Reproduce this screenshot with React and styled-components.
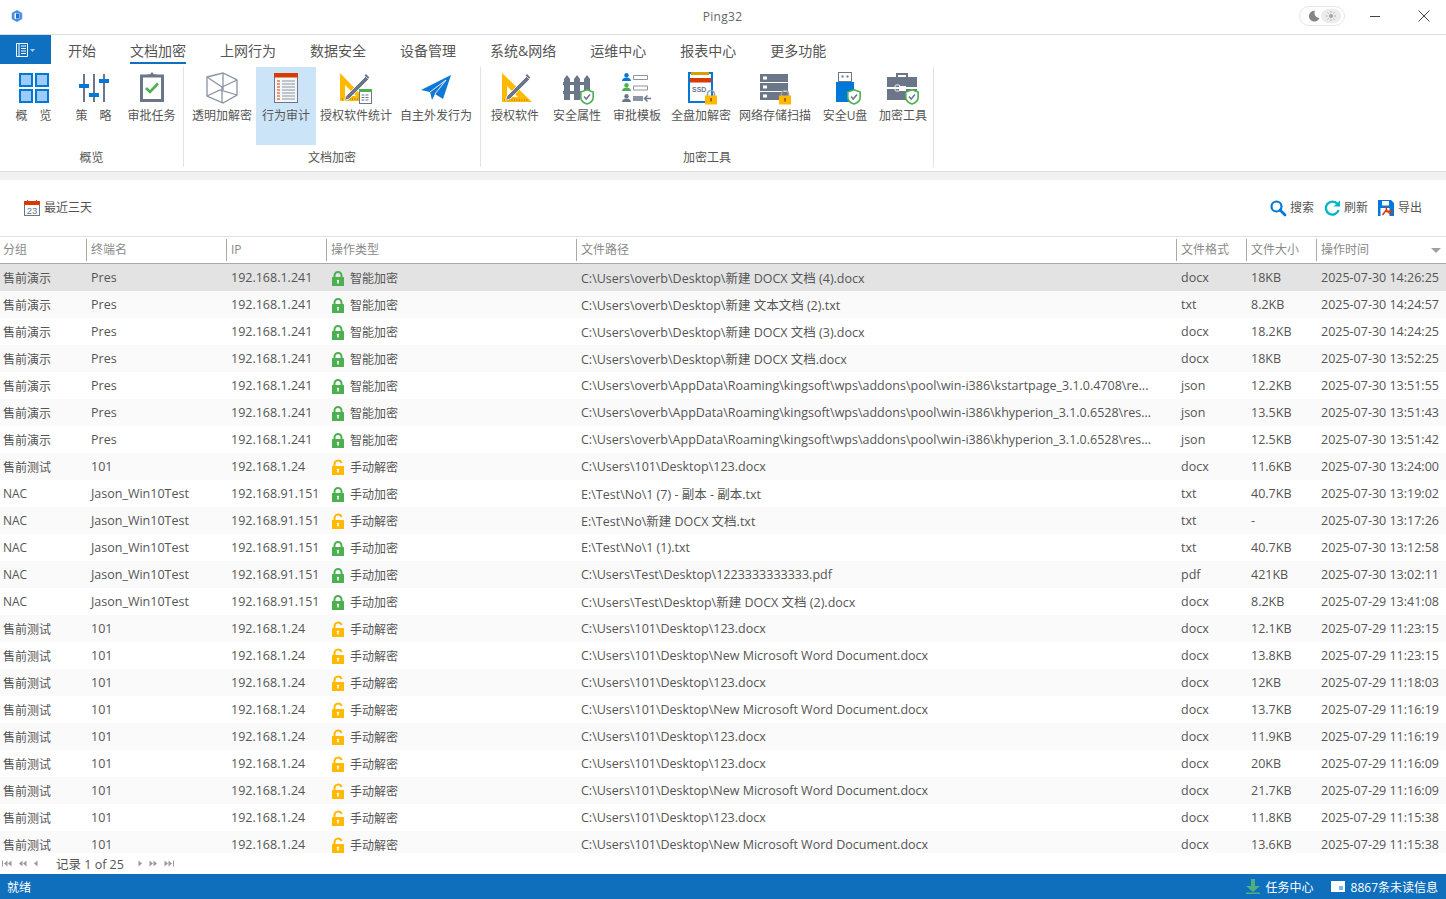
import React from 'react';
import styled, { createGlobalStyle } from 'styled-components';

const GRAY = '#6b7789';
const BLUE = '#0078d7';
const GREEN = '#4caf50';
const AMBER = '#ffb900';

const GlobalStyle = createGlobalStyle`
  html, body { margin: 0; padding: 0; height: 100%; overflow: hidden; background: #fff; }
  #root { height: 100%; }
  * { box-sizing: border-box; }
`;

// small parts that several icons share //
const Shield = ({ x, y }) => (
  <g transform={`translate(${x} ${y})`}>
    <path d="M7 .8 13.2 3v5.2c0 3.4-2.6 5.6-6.2 6.9C3.4 13.8.8 11.6.8 8.2V3z" fill="#fff" stroke={GREEN} strokeWidth="1.6" />
    <path d="M4 7.6 6.2 10 10 5.6" fill="none" stroke={GRAY} strokeWidth="1.5" />
  </g>
);

const SmallLock = ({ x, y }) => (
  <g transform={`translate(${x} ${y})`}>
    <path d="M2.5 7V5a3.5 3.5 0 0 1 7 0v2" fill="none" stroke="#9aa3af" strokeWidth="1.7" />
    <rect y="6.5" width="12" height="9" fill={AMBER} />
    <rect x="5.3" y="9" width="1.5" height="3.5" fill="#7a5a00" />
  </g>
);

const Pencil = ({ dx = 0 }) => (
  <g transform={`translate(${dx} 0)`}>
    <path d="M6 24 25.5 4.5l3 3L9 27l-4.6 1.4z" fill={GRAY} stroke="#fff" strokeWidth=".8" />
    <path d="M24.5 3.5 26 2l3.4 3.4L28 6.8z" fill={GRAY} />
  </g>
);

const Svg = styled.svg`
  display: block;
  flex: none;
  overflow: visible;
`;

const Icon = ({ size = 32, view, children }) => (
  <Svg width={size} height={size} viewBox={view || `0 0 ${size} ${size}`}>
    {children}
  </Svg>
);

const OverviewIcon = () => (
  <Icon>
    {[[1, 1], [17, 1], [1, 17], [17, 17]].map(([x, y]) => (
      <rect key={`${x}${y}`} x={x + 1} y={y + 1} width="12" height="12" fill="#9ccbf7" stroke={BLUE} strokeWidth="2" />
    ))}
  </Icon>
);

const PolicyIcon = () => (
  <Icon>
    <path d="M6 2v28M16 2v28M26 2v28" stroke={GRAY} strokeWidth="2" />
    <path d="M1 12h10v4H1zM11 21h10v4H11zM21 7h10v4H21z" fill={BLUE} />
  </Icon>
);

const ApproveIcon = () => (
  <Icon>
    <rect x="5.5" y="4" width="21" height="24.5" fill="#fff" stroke={GRAY} strokeWidth="3" />
    <path d="M11 5V2.5h3L16 0l2 2.5h3V5z" fill={GRAY} />
    <path d="M10 16l4 4 8-8.5" fill="none" stroke={GREEN} strokeWidth="2.6" />
  </Icon>
);

const CubeIcon = () => (
  <Icon>
    <g fill="none" stroke="#8a94a3" strokeWidth="1.3">
      <path d="M1 5 17 1l14 7v15L17 31 1 24z" />
      <path d="M1 5l15 10 15-7M16 15v16M1 24l13-6 17 5M17 1v17" />
    </g>
  </Icon>
);

const AuditIcon = () => (
  <Icon>
    <rect x="4.5" y="1.5" width="23" height="29" fill="#f4f6f8" stroke={GRAY} />
    <rect x="4" y="1" width="24" height="4.5" fill="#d83b01" />
    {[9, 12, 15, 18, 21, 24, 27].map((y) => (
      <g key={y}>
        <path d={`M7 ${y}h3`} stroke="#d83b01" />
        <path d={`M12 ${y}h13`} stroke="#8a94a3" />
      </g>
    ))}
  </Icon>
);

const SoftwareStatIcon = () => (
  <Icon>
    <path d="M0 1v28h27z" fill={AMBER} />
    <path d="M5 13v11h11z" fill="#fff" />
    <path d="M2 27h20" stroke="#8a6a00" strokeDasharray="1 1.5" />
    <Pencil />
    <rect x="19.5" y="17.5" width="12" height="14" fill="#fff" stroke={GRAY} />
    <rect x="19" y="17" width="13" height="3" fill={GREEN} />
    <path d="M21.5 23h8M21.5 25.5h8M21.5 28h8" stroke={GRAY} strokeDasharray="3 1" />
  </Icon>
);

const PlaneIcon = () => (
  <Icon>
    <path d="M1 18 31 3 23 27l-8-5-3 6-2-8z" fill="#0f78d4" />
    <path d="M10 20 26 8 15 22" fill="none" stroke="#fff" strokeWidth=".9" />
  </Icon>
);

const LicenseIcon = () => (
  <Icon>
    <path d="M3 1v29h30z" fill={AMBER} />
    <path d="M8 14v11h11z" fill="#fff" />
    <path d="M5 28h24" stroke="#8a6a00" strokeDasharray="1 1.5" />
    <Pencil dx={2} />
  </Icon>
);

const FenceIcon = () => (
  <Icon>
    <path d="M2 10h26v3H2zM2 19h26v3H2z" fill={GRAY} />
    {[2, 12, 22].map((x) => (
      <path key={x} d={`M${x} 5l3-4 3 4v21h-6z`} fill={GRAY} transform={`translate(1 2)`} />
    ))}
    <Shield x={19} y={17} />
  </Icon>
);

const Person = ({ y, color }) => (
  <g transform={`translate(1 ${y})`}>
    <circle cx="4.5" cy="2.2" r="2.2" fill={color} />
    <path d="M0 8c0-2 2-3.4 4.5-3.4S9 6 9 8z" fill={color} />
  </g>
);

const TemplateIcon = () => (
  <Icon>
    <Person y={1} color={BLUE} />
    <Person y={11} color={GREEN} />
    <Person y={22} color={GRAY} />
    <path d="M12.5 3.5h14v4h-14zM12.5 14h14v4h-14z" fill="#fff" stroke="#8a94a3" />
    <rect x="12" y="24" width="10" height="5" fill="#8a94a3" />
    <path d="M30 26.5h-6M26.5 23.5l-3 3 3 3" fill="none" stroke={GRAY} strokeWidth="1.4" />
  </Icon>
);

const SsdIcon = () => (
  <Icon>
    <rect x="4" y="1" width="23" height="29" fill="#fff" stroke={BLUE} strokeWidth="2" />
    <rect x="6" y="0" width="18" height="3" fill="#d6a000" />
    <rect x="5" y="6" width="21" height="4.5" fill="#d83b01" />
    <SsdText x="7" y="20">SSD</SsdText>
    <SmallLock x={20} y={17} />
  </Icon>
);

const SsdText = styled.text`
  font: 700 7px "Liberation Sans", sans-serif;
  fill: ${GRAY};
`;

const StorageIcon = () => (
  <Icon>
    {[2, 11, 20].map((y) => (
      <g key={y}>
        <rect x="1" y={y} width="28" height="8" fill={GRAY} />
        <rect x="4" y={y + 2.5} width="4" height="3" fill="#fff" />
      </g>
    ))}
    <SmallLock x={20} y={17} />
  </Icon>
);

const UsbIcon = () => (
  <Icon>
    <rect x="9.5" y=".5" width="13" height="9" fill="#fff" stroke={GRAY} />
    <path d="M12.5 3.5h2v2h-2zM17.5 3.5h2v2h-2z" fill={GRAY} />
    <rect x="7" y="10" width="18" height="20" fill={BLUE} />
    <Shield x={18} y={17} />
  </Icon>
);

const CaseIcon = () => (
  <Icon>
    <path d="M10 6V2h10v4" fill="none" stroke={GRAY} strokeWidth="2" />
    <path d="M0 5h30v10H19v-1h-7v1H0zM0 17h12v2h7v-2h11v11H0z" fill={GRAY} />
    <rect x="8" y="13" width="5" height="6" rx="1.5" fill="none" stroke="#fff" />
    <Shield x={18} y={17} />
  </Icon>
);

const CalendarIcon = () => (
  <Icon size={16}>
    <rect x=".5" y="1.5" width="15" height="14" fill="#fff" stroke={GRAY} />
    <rect y="1" width="16" height="4" fill="#d83b01" />
    <path d="M3.5 0v2M12.5 0v2" stroke="#d83b01" />
    <CalendarText x="8" y="14">23</CalendarText>
  </Icon>
);

const CalendarText = styled.text`
  font: 9.5px "Liberation Sans", sans-serif;
  fill: ${GRAY};
  text-anchor: middle;
`;

const SearchIcon = () => (
  <Icon size={16}>
    <circle cx="6.5" cy="6.5" r="5" fill="none" stroke={BLUE} strokeWidth="2.2" />
    <path d="M10 10l5 5" stroke={BLUE} strokeWidth="2.8" strokeLinecap="round" />
  </Icon>
);

const RefreshIcon = () => (
  <Icon size={16}>
    <path d="M13.6 4.2A6.5 6.5 0 1 0 14.6 10" fill="none" stroke="#00b7c3" strokeWidth="2.4" />
    <path d="M9.5 6.5H16V.5z" fill="#00b7c3" />
  </Icon>
);

const ExportIcon = () => (
  <Icon size={16}>
    <path d="M0 0h13l3 3v13H0z" fill={BLUE} />
    <path d="M4 1h7v4.500H4z" fill="#fff" />
    <path d="M2.500 8h9v8h-9z" fill="#fff" />
    <path d="M8 6.500l.8 4.500 4.200 3.500M8.300 10l-3.800 5M8 11.500l7-.5" fill="none" stroke="#d83b01" strokeWidth="1.500" />
  </Icon>
);

const ClosedLock = () => (
  <Icon size={16}>
    <path d="M3.500 8V5.500a3.500 3.500 0 0 1 7 0V8" fill="none" stroke={GREEN} strokeWidth="2" />
    <rect x="1" y="7" width="12" height="9" rx=".5" fill={GREEN} />
    <path d="M7 10v3.500" stroke="#fff" strokeWidth="1.500" />
    <path d="M5.500 11 7 9.500 8.500 11z" fill="#fff" />
  </Icon>
);

const OpenLock = () => (
  <Icon size={16}>
    <path d="M3.500 7.500V5.200a3.600 3.600 0 0 1 7-1.200" fill="none" stroke={AMBER} strokeWidth="2" />
    <rect x="1" y="7" width="12" height="9" rx=".5" fill={AMBER} />
    <path d="M7 10v3.500" stroke="#fff" strokeWidth="1.500" />
    <path d="M5.500 11 7 9.500 8.500 11z" fill="#fff" />
  </Icon>
);

const PageMark = ({ bar, count, flip }) => {
  const tris = [];
  for (let i = 0; i < count; i++) {
    const x = (bar ? 2 : 0) + i * 4;
    tris.push(<path key={i} d={`M${x} 3.500 ${x + 3.500} .5v6z`} />);
  }
  return (
    <PageSvg width={(bar ? 2 : 0) + count * 4} height="7" $flip={flip}>
      {bar && <rect y=".5" width="1" height="6" />}
      {tris}
    </PageSvg>
  );
};

const PageSvg = styled.svg`
  display: block;
  fill: #9a9a9a;
  transform: ${(p) => (p.$flip ? 'scaleX(-1)' : 'none')};
`;

const ribbonGroups = [
  {
    name: '概览',
    width: 184,
    items: [
      { label: '概　览', w: 60, icon: <OverviewIcon /> },
      { label: '策　略', w: 60, icon: <PolicyIcon /> },
      { label: '审批任务', w: 56, icon: <ApproveIcon /> },
    ],
  },
  {
    name: '文档加密',
    width: 297,
    items: [
      { label: '透明加解密', w: 68, icon: <CubeIcon /> },
      { label: '行为审计', w: 60, icon: <AuditIcon />, active: true },
      { label: '授权软件统计', w: 80, icon: <SoftwareStatIcon /> },
      { label: '自主外发行为', w: 80, icon: <PlaneIcon /> },
    ],
  },
  {
    name: '加密工具',
    width: 453,
    items: [
      { label: '授权软件', w: 58, icon: <LicenseIcon /> },
      { label: '安全属性', w: 66, icon: <FenceIcon /> },
      { label: '审批模板', w: 54, icon: <TemplateIcon /> },
      { label: '全盘加解密', w: 74, icon: <SsdIcon /> },
      { label: '网络存储扫描', w: 74, icon: <StorageIcon /> },
      { label: '安全U盘', w: 66, icon: <UsbIcon /> },
      { label: '加密工具', w: 50, icon: <CaseIcon /> },
    ],
  },
];

const tabs = ['开始', '文档加密', '上网行为', '数据安全', '设备管理', '系统&网络', '运维中心', '报表中心', '更多功能'];
const columns = ['分组', '终端名', 'IP', '操作类型', '文件路径', '文件格式', '文件大小', '操作时间'];

const PRE = ['售前演示', 'Pres', '192.168.1.241'];
const TEST = ['售前测试', '101', '192.168.1.24'];
const NAC = ['NAC', 'Jason_Win10Test', '192.168.91.151'];
const WPS = 'C:\\Users\\overb\\AppData\\Roaming\\kingsoft\\wps\\addons\\pool\\win-i386\\';
const DOC = 'C:\\Users\\101\\Desktop\\123.docx';
const WORD = 'C:\\Users\\101\\Desktop\\New Microsoft Word Document.docx';

const rows = [
  [...PRE, '智能加密', 'C:\\Users\\overb\\Desktop\\新建 DOCX 文档 (4).docx', 'docx', '18KB', '2025-07-30 14:26:25'],
  [...PRE, '智能加密', 'C:\\Users\\overb\\Desktop\\新建 文本文档 (2).txt', 'txt', '8.2KB', '2025-07-30 14:24:57'],
  [...PRE, '智能加密', 'C:\\Users\\overb\\Desktop\\新建 DOCX 文档 (3).docx', 'docx', '18.2KB', '2025-07-30 14:24:25'],
  [...PRE, '智能加密', 'C:\\Users\\overb\\Desktop\\新建 DOCX 文档.docx', 'docx', '18KB', '2025-07-30 13:52:25'],
  [...PRE, '智能加密', `${WPS}kstartpage_3.1.0.4708\\re...`, 'json', '12.2KB', '2025-07-30 13:51:55'],
  [...PRE, '智能加密', `${WPS}khyperion_3.1.0.6528\\res...`, 'json', '13.5KB', '2025-07-30 13:51:43'],
  [...PRE, '智能加密', `${WPS}khyperion_3.1.0.6528\\res...`, 'json', '12.5KB', '2025-07-30 13:51:42'],
  [...TEST, '手动解密', DOC, 'docx', '11.6KB', '2025-07-30 13:24:00'],
  [...NAC, '手动加密', 'E:\\Test\\No\\1 (7) - 副本 - 副本.txt', 'txt', '40.7KB', '2025-07-30 13:19:02'],
  [...NAC, '手动解密', 'E:\\Test\\No\\新建 DOCX 文档.txt', 'txt', '-', '2025-07-30 13:17:26'],
  [...NAC, '手动加密', 'E:\\Test\\No\\1 (1).txt', 'txt', '40.7KB', '2025-07-30 13:12:58'],
  [...NAC, '手动加密', 'C:\\Users\\Test\\Desktop\\1223333333333.pdf', 'pdf', '421KB', '2025-07-30 13:02:11'],
  [...NAC, '手动加密', 'C:\\Users\\Test\\Desktop\\新建 DOCX 文档 (2).docx', 'docx', '8.2KB', '2025-07-29 13:41:08'],
  [...TEST, '手动解密', DOC, 'docx', '12.1KB', '2025-07-29 11:23:15'],
  [...TEST, '手动解密', WORD, 'docx', '13.8KB', '2025-07-29 11:23:15'],
  [...TEST, '手动解密', DOC, 'docx', '12KB', '2025-07-29 11:18:03'],
  [...TEST, '手动解密', WORD, 'docx', '13.7KB', '2025-07-29 11:16:19'],
  [...TEST, '手动解密', DOC, 'docx', '11.9KB', '2025-07-29 11:16:19'],
  [...TEST, '手动解密', DOC, 'docx', '20KB', '2025-07-29 11:16:09'],
  [...TEST, '手动解密', WORD, 'docx', '21.7KB', '2025-07-29 11:16:09'],
  [...TEST, '手动解密', DOC, 'docx', '11.8KB', '2025-07-29 11:15:38'],
  [...TEST, '手动解密', WORD, 'docx', '13.6KB', '2025-07-29 11:15:38'],
];

const App = () => {
  return (
    <Page>
      <GlobalStyle />
      <TitleBar>
        <Logo>
          <svg width="12" height="12" viewBox="0 0 12 12">
            <path d="M6 0l5.200 3v6L6 12 .8 9V3z" fill="#4a90e2" />
            <path d="M3.500 3.200h5v5.600h-5z" fill="#fff" />
            <path d="M5 3.500h3.200v5H5z" fill="#1f6fd0" />
          </svg>
        </Logo>
        <AppTitle>Ping32</AppTitle>
        <WindowControls>
          <ThemeToggle>
            <svg width="12" height="12" viewBox="0 0 12 12">
              <path d="M7 .8A5.400 5.400 0 1 0 11.400 8 5 5 0 0 1 7 .8z" fill="#85858c" />
            </svg>
            <SunBox>
              <svg width="10" height="10" viewBox="0 0 10 10">
                <circle cx="5" cy="5" r="2" fill="#a4a4aa" />
                <path d="M5 0v1.500M5 8.500V10M0 5h1.500M8.500 5H10M1.500 1.500l1 1M7.500 7.500l1 1M1.500 8.500l1-1M7.500 2.500l1-1" stroke="#a4a4aa" />
              </svg>
            </SunBox>
          </ThemeToggle>
          <svg width="10" height="10" viewBox="0 0 10 10">
            <path d="M0 5.500h10" stroke="#444" />
          </svg>
          <svg width="12" height="12" viewBox="0 0 12 12">
            <path d="M.5.5l11 11M11.500.5l-11 11" stroke="#444" />
          </svg>
        </WindowControls>
      </TitleBar>

      <TabBar>
        <AppMenu>
          <svg width="20" height="14" viewBox="0 0 20 14">
            <path d="M.5.5h11v13H.5z" fill="none" stroke="#fff" />
            <path d="M3 .5v13M5 3h5M5 5.500h5M5 8h5M5 10.500h5" stroke="#fff" />
            <path d="M14 6h5l-2.500 3z" fill="#a9cdee" />
          </svg>
        </AppMenu>
        {tabs.map((tab) => (
          <Tab key={tab} $active={tab === '文档加密'}>{tab}</Tab>
        ))}
      </TabBar>

      <Ribbon>
        {ribbonGroups.map((group) => (
          <RibbonGroup key={group.name} $width={group.width}>
            <GroupItems>
              {group.items.map((item) => (
                <RibbonButton key={item.label} $width={item.w} $active={item.active}>
                  {item.icon}
                  <RibbonLabel>{item.label}</RibbonLabel>
                </RibbonButton>
              ))}
            </GroupItems>
            <GroupName>{group.name}</GroupName>
          </RibbonGroup>
        ))}
      </Ribbon>
      <RibbonStrip />

      <Toolbar>
        <ToolAction>
          <CalendarIcon />
          最近三天
        </ToolAction>
        <ToolActions>
          <ToolAction><SearchIcon />搜索</ToolAction>
          <ToolAction><RefreshIcon />刷新</ToolAction>
          <ToolAction><ExportIcon />导出</ToolAction>
        </ToolActions>
      </Toolbar>

      <HeaderRow>
        {columns.map((col, i) => (
          <HeaderCell key={col} $first={i === 0}>{col}</HeaderCell>
        ))}
        <SortMark />
      </HeaderRow>

      <Rows>
        {rows.map((row, index) => (
          <Row key={index} $index={index}>
            <GroupCell>{row[0]}</GroupCell>
            <Cell>{row[1]}</Cell>
            <Cell>{row[2]}</Cell>
            <OpCell>
              {row[3].endsWith('解密') ? <OpenLock /> : <ClosedLock />}
              {row[3]}
            </OpCell>
            <Cell>{row[4]}</Cell>
            <Cell>{row[5]}</Cell>
            <Cell>{row[6]}</Cell>
            <Cell>{row[7]}</Cell>
          </Row>
        ))}
      </Rows>

      <Pager>
        <PageMarks>
          <PageMark bar count={2} />
          <PageMark count={2} />
          <PageMark count={1} />
        </PageMarks>
        <PagerText>记录 1 of 25</PagerText>
        <PageMarks>
          <PageMark count={1} flip />
          <PageMark count={2} flip />
          <PageMark bar count={2} flip />
        </PageMarks>
      </Pager>

      <StatusBar>
        就绪
        <StatusRight>
          <StatusItem>
            <svg width="14" height="15" viewBox="0 0 14 15">
              <path d="M5 0h4v7h5l-7 6-7-6h5zM0 13.500h14V15H0z" fill="#4caf7d" />
            </svg>
            任务中心
          </StatusItem>
          <StatusItem>
            <svg width="14" height="11" viewBox="0 0 14 11">
              <rect width="14" height="11" fill="#fff" />
              <path d="M8 6h4M8 8h4" stroke="#0f6fbd" />
            </svg>
            8867条未读信息
          </StatusItem>
        </StatusRight>
      </StatusBar>
    </Page>
  );
};

const Page = styled.div`
  height: 100vh;
  display: flex;
  flex-direction: column;
  overflow: hidden;
  color: #555;
  font-family: "Open Sans", "Noto Sans CJK SC", sans-serif;
  font-size: 12px;
`;

const TitleBar = styled.div`
  height: 35px;
  flex: none;
  display: grid;
  grid-template-columns: 1fr auto 1fr;
  align-items: center;
  border-bottom: 1px solid #dedede;
  padding-bottom: 2px;
`;

const Logo = styled.div`
  padding-left: 11px;
  height: 12px;
  svg {
    display: block;
  }
`;

const AppTitle = styled.div`
  color: #666;
  letter-spacing: 0.3px;
  margin-left: -1px;
`;

const WindowControls = styled.div`
  display: flex;
  justify-content: flex-end;
  align-items: center;
  padding-right: 16px;
  gap: 25px;
  svg:last-child {
    margin-left: 13px;
  }
`;

const ThemeToggle = styled.div`
  width: 46px;
  height: 20px;
  border: 1px solid #e6e6e6;
  border-radius: 10px;
  display: flex;
  align-items: center;
  justify-content: space-between;
  padding: 0 3px 0 8px;
  && svg {
    margin-left: 0;
  }
`;

const SunBox = styled.div`
  width: 20px;
  height: 14px;
  border-radius: 7px;
  background: #ececec;
  display: flex;
  align-items: center;
  justify-content: center;
`;

const TabBar = styled.div`
  height: 32px;
  flex: none;
  display: flex;
  gap: 34px;
`;

const AppMenu = styled.div`
  width: 51px;
  height: 29px;
  margin-right: -17px;
  background: #0f6fc0;
  display: flex;
  align-items: center;
  justify-content: center;
`;

const Tab = styled.div`
  height: 29px;
  line-height: 32px;
  font-size: 14px;
  color: #555;
  border-bottom: 2px solid ${(p) => (p.$active ? '#0f6fc0' : 'transparent')};
`;

const Ribbon = styled.div`
  height: 104px;
  flex: none;
  display: flex;
  align-items: flex-start;
  border-bottom: 0;
`;

const RibbonGroup = styled.div`
  width: ${(p) => p.$width}px;
  height: 100px;
  display: flex;
  flex-direction: column;
  border-right: 1px solid #e2e2e2;
`;

const GroupItems = styled.div`
  height: 80px;
  display: flex;
  justify-content: center;
`;

const RibbonButton = styled.div`
  width: ${(p) => p.$width}px;
  flex: none;
  display: flex;
  flex-direction: column;
  align-items: center;
  padding-top: 5px;
  background: ${(p) => (p.$active ? '#cce4f7' : 'transparent')};
`;

const RibbonLabel = styled.div`
  margin-top: 3px;
  line-height: 18px;
  white-space: nowrap;
`;

const GroupName = styled.div`
  line-height: 18px;
  text-align: center;
  margin-top: 4px;
`;

const RibbonStrip = styled.div`
  height: 9px;
  flex: none;
  background: #f1f1f1;
  border-top: 1px solid #dedede;
`;

const Toolbar = styled.div`
  height: 56px;
  flex: none;
  display: flex;
  align-items: center;
  justify-content: space-between;
  padding: 0 24px;
`;

const ToolActions = styled.div`
  display: flex;
  gap: 10px;
`;

const ToolAction = styled.div`
  display: flex;
  align-items: center;
  gap: 4px;
  line-height: 16px;
`;

const gridColumns = '86px 140px 100px 250px 600px 70px 70px 130px';

const HeaderRow = styled.div`
  position: relative;
  height: 28px;
  flex: none;
  display: grid;
  grid-template-columns: ${gridColumns};
  border-top: 1px solid #e2e2e2;
  border-bottom: 1px solid #aaa;
`;

const HeaderCell = styled.div`
  margin: 2px 0;
  padding-left: ${(p) => (p.$first ? 3 : 4)}px;
  line-height: 22px;
  color: #8a8a8a;
  border-left: ${(p) => (p.$first ? '0' : '1px solid #aaa')};
`;

const SortMark = styled.div`
  position: absolute;
  right: 5px;
  top: 11px;
  border-style: solid;
  border-width: 5px 5px 0;
  border-color: #a0a0a0 transparent transparent;
`;

const Rows = styled.div`
  flex: 1;
  min-height: 0;
  overflow: hidden;
`;

const Row = styled.div`
  height: 27px;
  display: grid;
  grid-template-columns: ${gridColumns};
  align-items: center;
  background: ${(p) => (p.$index === 0 ? '#e3e3e3' : p.$index % 2 ? '#fafafa' : '#fff')};
`;

const Cell = styled.div`
  padding-left: 5px;
  font-size: 12.5px;
  white-space: nowrap;
  overflow: hidden;
`;

const GroupCell = styled(Cell)`
  padding-left: 3px;
  font-size: 12px;
`;

const OpCell = styled(Cell)`
  display: flex;
  align-items: center;
  gap: 3px;
  font-size: 12px;
`;

const Pager = styled.div`
  height: 21px;
  flex: none;
  display: flex;
  align-items: center;
  padding-left: 2px;
`;

const PageMarks = styled.div`
  display: flex;
  align-items: center;
  gap: 7px;
`;

const PagerText = styled.div`
  margin: 0 14px 0 18px;
  font-size: 12.5px;
`;

const StatusBar = styled.div`
  height: 25px;
  flex: none;
  background: #0f6fbd;
  color: #fff;
  display: flex;
  align-items: center;
  justify-content: space-between;
  padding: 0 8px 0 7px;
`;

const StatusRight = styled.div`
  display: flex;
  gap: 17px;
`;

const StatusItem = styled.div`
  display: flex;
  align-items: center;
  gap: 6px;
`;

export default App;
